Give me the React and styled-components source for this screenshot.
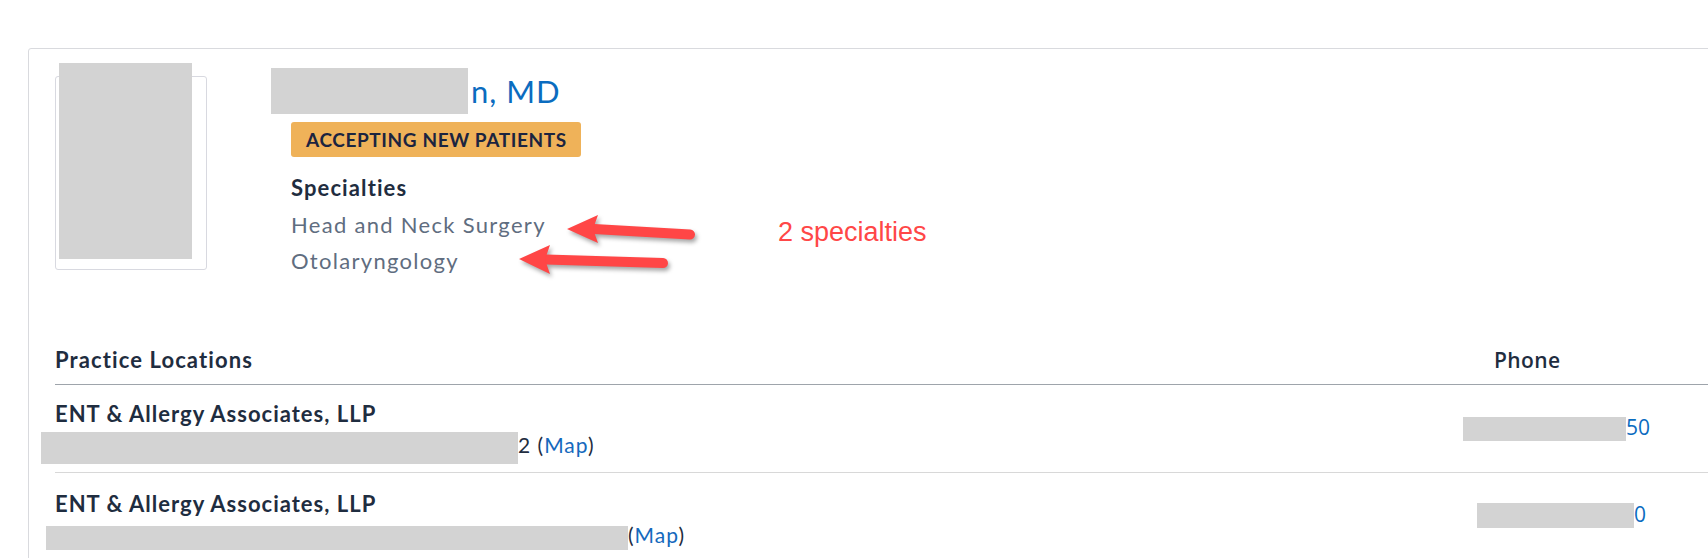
import React from "react"
import styled, { createGlobalStyle } from "styled-components"

const GlobalStyle = createGlobalStyle`
  html, body {
    margin: 0;
    padding: 0;
    background: #ffffff;
    overflow: hidden;
  }
  body {
    font-family: Lato, "Open Sans", Arial, sans-serif;
    color: #1f2d40;
  }
`

const Page = styled.div`
  padding: 48px 0 0 28px;
`

const Card = styled.div`
  position: relative;
  width: 1720px;
  border: 1px solid #d9dade;
  border-radius: 3px;
  padding-bottom: 40px;
`

const Profile = styled.div`
  display: flex;
  align-items: flex-start;
  padding: 19px 0 0 26px;
`

const PhotoFrame = styled.div`
  position: relative;
  flex: none;
  width: 150px;
  height: 192px;
  margin-top: 8px;
  border: 1px solid #d8d9e0;
  border-radius: 3px;
`

const Redact = styled.span`
  display: inline-block;
  background: #d3d3d3;
  width: ${(p) => p.$w}px;
  height: ${(p) => p.$h}px;
  margin-left: ${(p) => p.$shift || 0}px;
  vertical-align: ${(p) => p.$align || "middle"};
`

const PhotoRedact = styled.div`
  position: absolute;
  left: 3px;
  top: -14px;
  width: 133px;
  height: 196px;
  background: #d3d3d3;
`

const Info = styled.div`
  margin-left: 84px;
  display: flex;
  flex-direction: column;
  align-items: flex-start;
`

const Name = styled.h1`
  display: flex;
  align-items: center;
  height: 46px;
  margin: 0 0 0 -20px;
  font-size: 31px;
  font-weight: 400;
  line-height: 36px;
  letter-spacing: 1px;
  color: #0b6cbf;
`

const NameRest = styled.span`
  margin-left: 3px;
`

const Badge = styled.div`
  margin-top: 8px;
  height: 35px;
  padding: 0 14px 0 15px;
  border-radius: 3px;
  background: #efb259;
  color: #1b2440;
  font-size: 19px;
  font-weight: 700;
  line-height: 35px;
  letter-spacing: 0.6px;
`

const SectionLabel = styled.div`
  margin-top: 19px;
  font-size: 22px;
  font-weight: 700;
  line-height: 24px;
  letter-spacing: 1.1px;
  color: #1f2d40;
`

const SpecialtyList = styled.ul`
  list-style: none;
  margin: 7px 0 0;
  padding: 0;
`

const Specialty = styled.li`
  font-size: 22px;
  line-height: 36px;
  letter-spacing: 1.3px;
  color: #5f6d80;
`

const Annotation = styled.div`
  position: absolute;
  left: 749px;
  top: 170px;
  font-family: "Liberation Sans", Arial, sans-serif;
  font-size: 27px;
  line-height: 27px;
  color: #ff4747;
`

const Arrows = styled.svg`
  position: absolute;
  left: 481px;
  top: 156px;
  overflow: visible;
  filter: drop-shadow(2px 3px 2px rgba(0, 0, 0, 0.35));
`

const Locations = styled.div`
  display: grid;
  grid-template-columns: 1439px 1fr;
  margin: 69px 0 0 26px;
`

const HeadCell = styled.div`
  font-size: 22px;
  font-weight: 700;
  line-height: 24px;
  letter-spacing: 1.1px;
  padding-bottom: 12px;
  border-bottom: 1px solid #9ea4ab;
  color: #1f2d40;
`

const PhoneHead = styled(HeadCell)`
  font-family: "Open Sans", Arial, sans-serif;
  font-size: 21px;
  font-weight: 600;
  letter-spacing: 0.4px;
`

const LocationCell = styled.div`
  padding: ${(p) => (p.$first ? "16px" : "18px")} 0 8px;
  border-bottom: ${(p) => (p.$last ? "none" : "1px solid #d8d8d8")};
`

const PhoneCell = styled.div`
  display: flex;
  align-items: center;
  padding-bottom: 4px;
  border-bottom: ${(p) => (p.$last ? "none" : "1px solid #d8d8d8")};
  font-family: "Open Sans", Arial, sans-serif;
  font-size: 21px;
  color: #0b6cbf;
`

const Practice = styled.div`
  font-size: 22px;
  font-weight: 700;
  line-height: 26px;
  letter-spacing: 1px;
  color: #1f2d40;
`

const Address = styled.div`
  margin-top: 4px;
  font-size: 21px;
  line-height: 28px;
  letter-spacing: 1px;
  color: #1f2d40;
`

const MapLink = styled.a`
  color: #1569bd;
  text-decoration: none;
`

const Paren = styled.span`
  color: #1f2d40;
`

const locations = [
  {
    name: "ENT & Allergy Associates, LLP",
    redact: { w: 477, h: 32, shift: -14, align: "-11px" },
    tail: "2 ",
    phoneRedact: { w: 163, h: 24, shift: -31 },
    phoneTail: "50",
  },
  {
    name: "ENT & Allergy Associates, LLP",
    redact: { w: 582, h: 24, shift: -9, align: "-7px" },
    tail: "",
    phoneRedact: { w: 157, h: 25, shift: -17 },
    phoneTail: "0",
  },
]

const Arrow = ({ tip, back, half, tail }) => (
  <g fill="#ff4646" stroke="#ff4646">
    <line
      x1={back[0] - 4}
      y1={back[1]}
      x2={tail[0]}
      y2={tail[1]}
      strokeWidth="10"
      strokeLinecap="round"
    />
    <polygon
      stroke="none"
      points={`${tip[0]},${tip[1]} ${back[0]},${back[1] - half} ${back[0] - 5},${back[1]} ${back[0]},${back[1] + half}`}
    />
  </g>
)

export default function App() {
  return (
    <>
      <GlobalStyle />
      <Page>
        <Card>
          <Profile>
            <PhotoFrame>
              <PhotoRedact />
            </PhotoFrame>
            <Info>
              <Name>
                <Redact $w={197} $h={46} />
                <NameRest>n, MD</NameRest>
              </Name>
              <Badge>ACCEPTING NEW PATIENTS</Badge>
              <SectionLabel>Specialties</SectionLabel>
              <SpecialtyList>
                <Specialty>Head and Neck Surgery</Specialty>
                <Specialty>Otolaryngology</Specialty>
              </SpecialtyList>
            </Info>
          </Profile>

          <Arrows width="200" height="80" viewBox="0 0 200 80">
            <Arrow tip={[57, 24]} back={[88, 24]} half={14} tail={[180, 29.5]} />
            <Arrow tip={[9, 54]} back={[40, 54.5]} half={14.5} tail={[153, 58]} />
          </Arrows>
          <Annotation>2 specialties</Annotation>

          <Locations>
            <HeadCell>Practice Locations</HeadCell>
            <PhoneHead>Phone</PhoneHead>
            {locations.map((loc, i) => {
              const last = i === locations.length - 1
              return (
                <React.Fragment key={i}>
                  <LocationCell $first={i === 0} $last={last}>
                    <Practice>{loc.name}</Practice>
                    <Address>
                      <Redact
                        $w={loc.redact.w}
                        $h={loc.redact.h}
                        $shift={loc.redact.shift}
                        $align={loc.redact.align}
                      />
                      {loc.tail}
                      <Paren>(</Paren>
                      <MapLink href="#">Map</MapLink>
                      <Paren>)</Paren>
                    </Address>
                  </LocationCell>
                  <PhoneCell $last={last}>
                    <span>
                      <Redact
                        $w={loc.phoneRedact.w}
                        $h={loc.phoneRedact.h}
                        $shift={loc.phoneRedact.shift}
                        $align="-6px"
                      />
                      {loc.phoneTail}
                    </span>
                  </PhoneCell>
                </React.Fragment>
              )
            })}
          </Locations>
        </Card>
      </Page>
    </>
  )
}
